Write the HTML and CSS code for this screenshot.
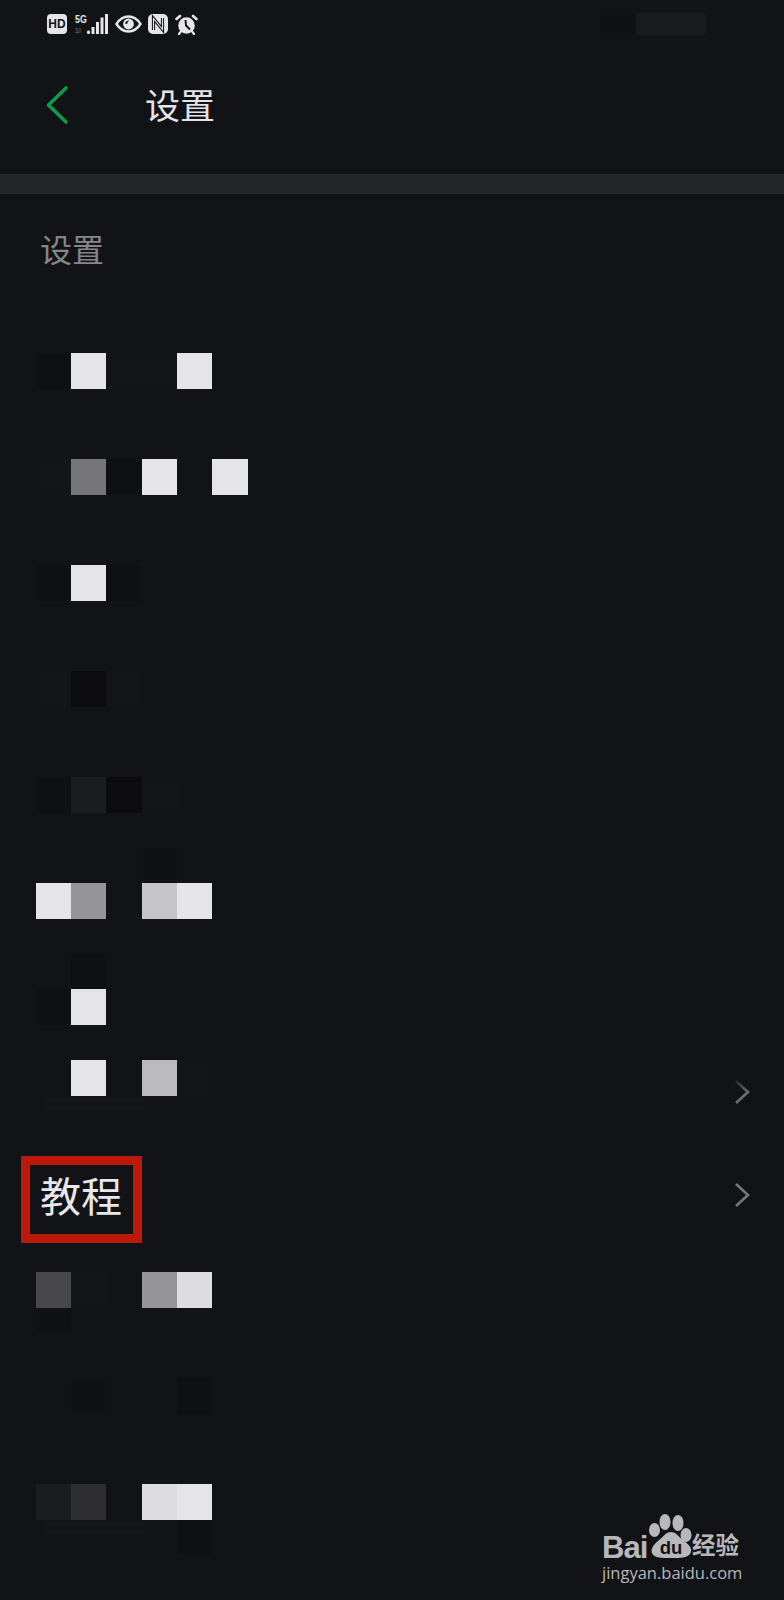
FILE: index.html
```html
<!DOCTYPE html>
<html lang="zh-CN">
<head>
    <meta charset="UTF-8">
    <meta name="viewport" content="width=device-width, initial-scale=1.0">
    <title>设置</title>
    <link rel="stylesheet" href="styles.css">
</head>
<body>
    <div class="phone">
        <div class="status-bar">
            <span class="hd-badge">HD</span>
            <span class="signal">
                <span class="net-labels">
                    <span class="net-5g">5G</span>
                    <span class="net-1">1l</span>
                </span>
                <svg width="21" height="20" viewBox="0 0 21 20">
                    <rect x="0" y="16.500" width="3" height="3.500" rx="1.200" fill="#e6e6e8"/>
                    <rect x="4.500" y="13" width="3" height="7" fill="#e6e6e8"/>
                    <rect x="9" y="8" width="3" height="12" fill="#e6e6e8"/>
                    <rect x="13.500" y="3.500" width="3" height="16.500" fill="#e6e6e8"/>
                    <rect x="18" y="0" width="3" height="20" fill="#e6e6e8"/>
                </svg>
            </span>
            <svg class="status-eye" width="27" height="18" viewBox="0 0 27 18">
                <path d="M1.500 9C5 3.500 9 1.500 13.500 1.500S22 3.500 25.500 9C22 14.500 18 16.500 13.500 16.500S5 14.500 1.500 9Z" fill="none" stroke="#e6e6e8" stroke-width="2.400"/>
                <circle cx="13.500" cy="9" r="5.400" fill="#e6e6e8"/>
                <path d="M10 8.500C10.500 6.500 12 5.500 14.500 5.500C13 6.500 12.500 7.500 12 9Z" fill="#121317"/>
            </svg>
            <svg class="status-nfc" width="20" height="20" viewBox="0 0 20 20">
                <rect x="0" y="0" width="20" height="20" rx="5" fill="#e6e6e8"/>
                <path d="M5.500 16V4.500L14.500 15.500V4" fill="none" stroke="#121317" stroke-width="3.200"/>
                <path d="M5.500 16V4.500L14.500 15.500V4" fill="none" stroke="#e6e6e8" stroke-width="1.100"/>
            </svg>
            <svg class="status-alarm" width="23" height="21" viewBox="0 0 23 21">
                <circle cx="11.500" cy="11.500" r="8.300" fill="#e6e6e8"/>
                <path d="M10.500 6L11 11.500L15 15.500" fill="none" stroke="#121317" stroke-width="1.900"/>
                <path d="M1.500 5L5 2M21.500 5L18 2" stroke="#e6e6e8" stroke-width="2.600" stroke-linecap="round"/>
                <path d="M5.500 18L4 20M17.500 18L19 20" stroke="#e6e6e8" stroke-width="2.200" stroke-linecap="round"/>
            </svg>
            <span class="status-shade"></span>
            <span class="status-blur"></span>
        </div>

        <div class="nav-bar">
            <svg class="back-icon" width="24" height="40" viewBox="0 0 24 40">
                <path d="M21 3L3.500 20L21 37" fill="none" stroke="#0f9c49" stroke-width="3.600" stroke-linecap="round" stroke-linejoin="round"/>
            </svg>
            <span class="nav-blur"></span>
            <span class="nav-title">设置</span>
        </div>

        <div class="divider"></div>

        <h2 class="section-title">设置</h2>

        <div class="settings-list">
            <div class="row row-first">
                <span class="tile t-dark"></span><span class="tile t-white"></span><span class="tile t-faint"></span><span class="tile t-faint"></span><span class="tile t-white"></span>
            </div>
            <div class="row">
                <span class="tile t-faint"></span><span class="tile t-gray-dark"></span><span class="tile t-dark"></span><span class="tile t-white"></span><span class="tile"></span><span class="tile t-white"></span>
            </div>
            <div class="row">
                <span class="tile t-dark"></span><span class="tile t-white"></span><span class="tile t-dark"></span>
            </div>
            <div class="row">
                <span class="tile t-faint"></span><span class="tile t-black"></span><span class="tile t-faint"></span>
            </div>
            <div class="row">
                <span class="tile t-dark"></span><span class="tile t-lift"></span><span class="tile t-black"></span><span class="tile t-faint"></span>
            </div>
            <div class="row">
                <span class="tile t-white"></span><span class="tile t-gray"></span><span class="tile"></span><span class="tile t-light"></span><span class="tile t-white"></span>
                <span class="patch patch-above-4"></span>
            </div>
            <div class="row">
                <span class="tile t-dark"></span><span class="tile t-white"></span>
                <span class="patch patch-above-2"></span>
            </div>
            <div class="row row-close">
                <span class="tile"></span><span class="tile t-white"></span><span class="tile"></span><span class="tile t-silver"></span><span class="tile t-faint"></span>
                <span class="ghost-text"></span>
                <svg class="chevron chevron-faded" width="16" height="26" viewBox="0 0 16 26">
                    <defs>
                        <linearGradient id="chevron-fade" x1="0" y1="0" x2="0" y2="1">
                            <stop offset="0" stop-color="#2a2b2e"/>
                            <stop offset="0.5" stop-color="#6a6b6e"/>
                        </linearGradient>
                    </defs>
                    <path d="M2 2L14 13L2 24" fill="none" stroke="url(#chevron-fade)" stroke-width="2.600"/>
                </svg>
            </div>
            <div class="tutorial-row">
                <span class="tutorial-label">教程</span>
                <svg class="chevron" width="16" height="26" viewBox="0 0 16 26">
                    <path d="M2 2L14 13L2 24" fill="none" stroke="#75767a" stroke-width="2.600"/>
                </svg>
            </div>
            <div class="row row-after-tutorial">
                <span class="tile t-gray-low"></span><span class="tile t-faint"></span><span class="tile"></span><span class="tile t-gray"></span><span class="tile t-near-white"></span>
                <span class="patch patch-below-1"></span>
            </div>
            <div class="row">
                <span class="tile"></span><span class="tile t-dim"></span><span class="tile"></span><span class="tile"></span><span class="tile t-dark"></span>
            </div>
            <div class="row">
                <span class="tile t-lift"></span><span class="tile t-gray-deep"></span><span class="tile"></span><span class="tile t-near-white"></span><span class="tile t-white"></span>
                <span class="ghost-text"></span>
                <span class="patch patch-below-5"></span>
            </div>
        </div>

        <div class="watermark">
            <div class="wm-logo">
                <span class="wm-bai">Bai</span>
                <span class="wm-paw">
                    <svg width="44" height="45" viewBox="0 0 44 45">
                        <ellipse cx="5.500" cy="16" rx="5.500" ry="7" fill="#b8b8ba"/>
                        <ellipse cx="16" cy="8" rx="5.500" ry="8" fill="#b8b8ba"/>
                        <ellipse cx="29" cy="9" rx="5.500" ry="8" fill="#b8b8ba"/>
                        <ellipse cx="37" cy="21" rx="5.500" ry="7" fill="#b8b8ba"/>
                        <path d="M22 18C27 18 30 23 35 27C41 31 44 36 41 40C38 44 32 44 22 44S6 44 3.500 40C1 36 4 31 9 27C14 23 17 18 22 18Z" fill="#b8b8ba"/>
                    </svg>
                    <span class="wm-du">du</span>
                </span>
                <span class="wm-cn">经验</span>
            </div>
            <div class="wm-url">jingyan.baidu.com</div>
        </div>
    </div>
</body>
</html>
```

FILE: styles.css
```css
* {
    box-sizing: border-box;
}
body {
    margin: 0;
    background-color: #121317;
    font-family: "Liberation Sans", "Noto Sans CJK SC", sans-serif;
}
.phone {
    position: relative;
    width: 784px;
    height: 1600px;
    overflow: hidden;
    background-color: #121317;
}

/* status bar */
.status-bar {
    display: flex;
    align-items: center;
    height: 48px;
    padding-left: 47px;
}
.hd-badge {
    width: 20px;
    height: 20px;
    border-radius: 4px;
    background-color: #e6e6e8;
    color: #121317;
    font-family: "Liberation Sans", sans-serif;
    font-size: 12px;
    font-weight: bold;
    line-height: 20px;
    text-align: center;
}
.signal {
    display: flex;
    align-items: flex-end;
    margin-left: 8px;
    height: 20px;
}
.net-labels {
    display: flex;
    flex-direction: column;
    width: 12px;
    font-weight: bold;
    line-height: 1;
}
.net-5g {
    color: #e6e6e8;
    font-size: 11px;
    height: 13px;
    transform: scaleX(0.8);
    transform-origin: left;
}
.net-1 {
    color: #5c5d60;
    font-size: 7px;
    height: 7px;
}
.status-eye {
    margin-left: 7px;
}
.status-nfc {
    margin-left: 6px;
}
.status-alarm {
    margin-left: 7px;
}
.status-shade {
    width: 36px;
    height: 22px;
    margin-left: auto;
    background-color: #101114;
}
.status-blur {
    width: 70px;
    height: 22px;
    margin-right: 78px;
    background-color: #1a1b1e;
}

/* nav bar */
.nav-bar {
    display: flex;
    align-items: center;
    height: 126px;
    padding: 0 0 12px 45px;
}
.nav-blur {
    width: 52px;
    height: 40px;
    margin-left: 6px;
    background-color: #111417;
}
.nav-title {
    margin-left: 18px;
    padding-top: 3px;
    color: #e4e4e6;
    font-size: 35px;
    line-height: 40px;
}
.divider {
    height: 20px;
    background-color: #24262a;
}
.section-title {
    margin: 0;
    padding: 39px 0 0 40px;
    color: #85868a;
    font-size: 32px;
    font-weight: normal;
    line-height: 36px;
}

/* list, every row sits on the same mosaic grid */
.settings-list {
    display: flex;
    flex-direction: column;
    gap: 70.500px;
    padding: 0 35px 0 35.500px;
}
.row {
    position: relative;
    display: flex;
    height: 35.500px;
    flex-shrink: 0;
}
.row-first {
    margin-top: 84px;
}
.row-close {
    margin-top: -35px;
}
.tile {
    width: 35.400px;
    height: 35.500px;
}
.t-white { background-color: #e5e5e9; }
.t-near-white { background-color: #dddde1; }
.t-light { background-color: #c6c6ca; }
.t-silver { background-color: #bbbabf; }
.t-gray { background-color: #959498; }
.t-gray-dark { background-color: #767679; }
.t-gray-low { background-color: #48484c; }
.t-gray-deep { background-color: #2e2e32; }
.t-lift { background-color: #1b1c1f; }
.t-faint { background-color: #141518; }
.t-dim { background-color: #101114; }
.t-dark { background-color: #0f1013; }
.t-black { background-color: #0c0c10; }

/* dark leftovers that hang off a row */
.patch {
    position: absolute;
    width: 35.400px;
    height: 35.500px;
    background-color: #0f1013;
}
.patch-above-2 {
    left: 35.400px;
    top: -35.500px;
}
.patch-above-4 {
    left: 106.200px;
    top: -35.500px;
    background-color: #101114;
}
.patch-below-1 {
    left: 0;
    top: 35.500px;
    height: 24px;
    background-color: #101114;
}
.patch-below-5 {
    left: 141.600px;
    top: 35.500px;
}
.ghost-text {
    position: absolute;
    left: 8px;
    top: 37px;
    width: 100px;
    height: 14px;
    background-color: #151619;
}

.chevron {
    position: absolute;
    right: -1px;
    top: 50%;
    margin-top: -13px;
}
.chevron-faded {
    margin-top: 1px;
}
.tutorial-row {
    position: relative;
    display: flex;
    align-items: center;
    height: 87px;
    margin: -10px 0 0 -14.500px;
    flex-shrink: 0;
}
.tutorial-row .chevron {
    margin-top: -17.500px;
}
.tutorial-label {
    display: block;
    width: 121px;
    height: 87px;
    border: 9px solid #bb1a0a;
    padding-left: 10px;
    color: #e8e8ea;
    font-size: 41px;
    line-height: 67px;
    white-space: nowrap;
}
.row-after-tutorial {
    margin-top: -41.500px;
}

/* watermark over the corner */
.watermark {
    position: absolute;
    left: 602px;
    top: 1514px;
    width: 142px;
    color: #b8b8ba;
}
.wm-logo {
    display: flex;
    align-items: flex-end;
    height: 45px;
}
.wm-bai {
    width: 47px;
    margin-bottom: -3px;
    font-family: "Liberation Sans", sans-serif;
    font-size: 31px;
    font-weight: bold;
    line-height: 28px;
    letter-spacing: -1px;
    flex-shrink: 0;
}
.wm-paw {
    position: relative;
    width: 44px;
    height: 45px;
    flex-shrink: 0;
}
.wm-du {
    position: absolute;
    left: 10px;
    top: 21.500px;
    width: 24px;
    color: #121317;
    font-family: "Liberation Sans", sans-serif;
    font-size: 18.500px;
    font-weight: bold;
    line-height: 24px;
    text-align: center;
}
.wm-cn {
    margin-left: -1px;
    font-size: 23.500px;
    font-weight: bold;
    line-height: 26px;
    white-space: nowrap;
}
.wm-url {
    margin-top: 4px;
    font-family: "Open Sans", sans-serif;
    font-size: 16.500px;
    line-height: 20px;
    white-space: nowrap;
}
```
